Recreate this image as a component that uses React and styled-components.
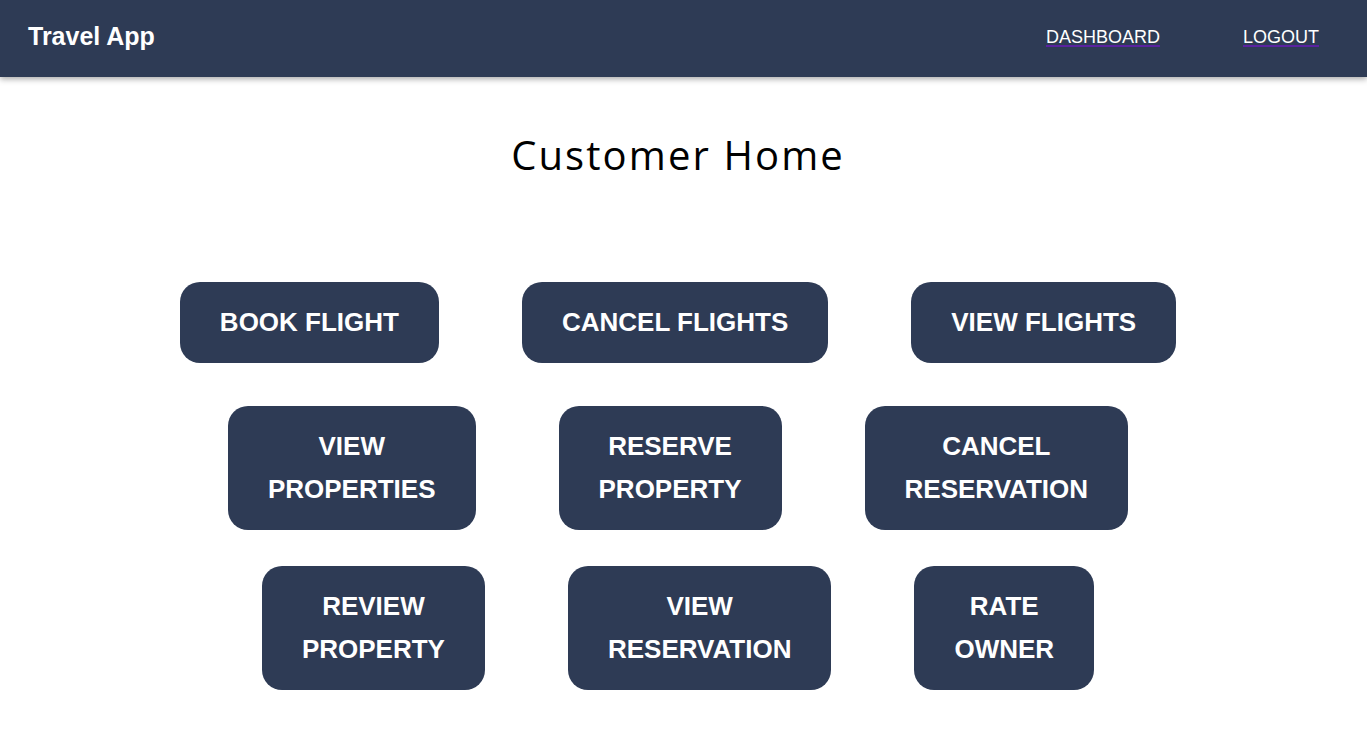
import React from "react";
import styled, { createGlobalStyle } from "styled-components";

const GlobalStyle = createGlobalStyle`
  body {
    margin: 0;
    background: #fff;
    font-family: "Liberation Sans", Arial, sans-serif;
  }
`;

const Nav = styled.header`
  background-color: #2e3b55;
  height: 77px;
  box-sizing: border-box;
  display: flex;
  align-items: center;
  justify-content: space-between;
  padding: 0 48px 4px 28px;
  box-shadow: 0 2px 6px rgba(0, 0, 0, 0.35);
  position: relative;
  z-index: 2;
`;

const Brand = styled.div`
  color: #fff;
  font-weight: bold;
  font-size: 25px;
`;

const NavItems = styled.nav`
  display: flex;
  align-items: center;
  gap: 83px;
  padding-top: 1px;
`;

const NavLink = styled.a`
  color: #fff;
  font-size: 18px;
  text-decoration: underline;
  text-decoration-color: #5a22a0;
  text-decoration-thickness: 2px;
  text-underline-offset: 2px;
  cursor: pointer;
`;

const Main = styled.main`
  display: flex;
  flex-direction: column;
  align-items: center;
  padding: 50px 11px 40px 0;
`;

const Title = styled.h1`
  margin: 0 0 100px;
  font-family: "Open Sans", sans-serif;
  font-weight: 400;
  font-size: 40px;
  letter-spacing: 2.1px;
  color: #000;
`;

const Row = styled.div`
  display: flex;
  justify-content: center;
  gap: 83px;
  margin-bottom: ${({ $gap }) => $gap}px;
`;

const ActionButton = styled.button`
  background: #2e3b55;
  color: #fff;
  border: none;
  border-radius: 20px;
  padding: 19px 40px;
  font-family: "Liberation Sans", Arial, sans-serif;
  font-weight: bold;
  font-size: 26px;
  line-height: 43px;
  text-transform: uppercase;
  text-align: center;
  cursor: pointer;
`;

const rows = [
  { gap: 43, items: [["Book Flight"], ["Cancel Flights"], ["View Flights"]] },
  {
    gap: 36,
    items: [
      ["View", "Properties"],
      ["Reserve", "Property"],
      ["Cancel", "Reservation"],
    ],
  },
  {
    gap: 0,
    items: [
      ["Review", "Property"],
      ["View", "Reservation"],
      ["Rate", "Owner"],
    ],
  },
];

export default function App() {
  return (
    <>
      <GlobalStyle />
      <Nav>
        <Brand>Travel App</Brand>
        <NavItems>
          <NavLink href="#dashboard">DASHBOARD</NavLink>
          <NavLink href="#logout">LOGOUT</NavLink>
        </NavItems>
      </Nav>
      <Main>
        <Title>Customer Home</Title>
        {rows.map((row, i) => (
          <Row key={i} $gap={row.gap}>
            {row.items.map((lines) => (
              <ActionButton key={lines.join(" ")}>
                {lines.map((l, j) => (
                  <React.Fragment key={l}>
                    {j > 0 && <br />}
                    {l}
                  </React.Fragment>
                ))}
              </ActionButton>
            ))}
          </Row>
        ))}
      </Main>
    </>
  );
}
